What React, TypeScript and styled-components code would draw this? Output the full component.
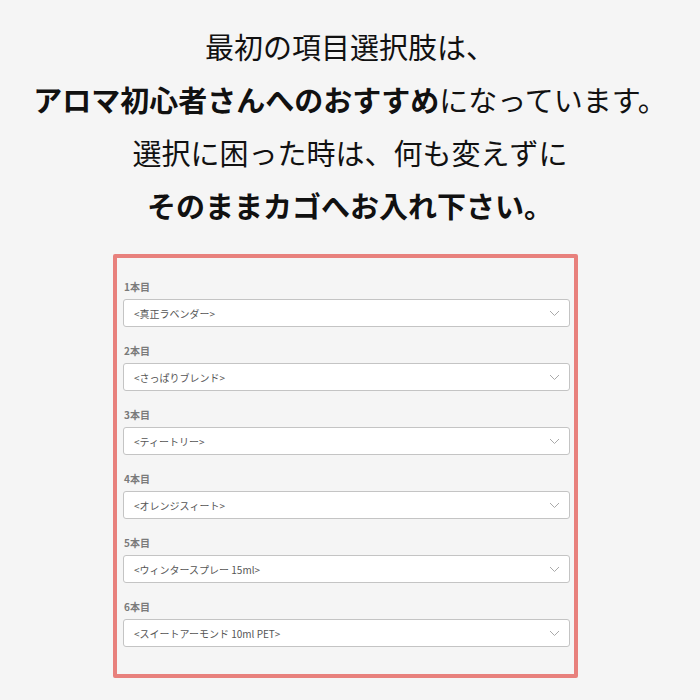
import React from 'react';
import styled, { createGlobalStyle } from 'styled-components';

const GlobalStyle = createGlobalStyle`
  html, body {
    margin: 0;
    padding: 0;
    background: #f5f5f5;
    font-family: "Noto Sans CJK JP", "Noto Sans", sans-serif;
  }
`;

const Page = styled.main`
  width: 700px;
  height: 700px;
  box-sizing: border-box;
  padding-top: 20px;
  display: flex;
  flex-direction: column;
  align-items: center;
`;

const Lead = styled.div`
  text-align: center;
  font-size: 29px;
  line-height: 53px;
  color: #111;
  margin-bottom: 22px;
`;

const Strong = styled.strong`
  font-weight: 700;
`;

const OptionPanel = styled.section`
  width: 465px;
  margin-right: 9px;
  box-sizing: border-box;
  border: 4px solid #e8817d;
  border-radius: 2px;
  background: #f5f5f5;
  padding: 20px 4px 27px 6px;
`;

const Field = styled.div`
  margin-bottom: 15px;
  &:last-child {
    margin-bottom: 0;
  }
`;

const FieldLabel = styled.div`
  font-size: 10px;
  line-height: 18px;
  font-weight: 700;
  color: #7a7a7a;
  padding-left: 1px;
  margin-bottom: 3px;
`;

const SelectBox = styled.div`
  height: 28px;
  box-sizing: border-box;
  background: #fff;
  border: 1px solid #c4c4c4;
  border-radius: 3px;
  display: flex;
  align-items: center;
  justify-content: space-between;
  padding: 0 9px 0 10px;
  font-size: 10px;
  color: #555;
`;

const Chevron = () => (
  <svg width="11" height="7" viewBox="0 0 11 7" fill="none">
    <path d="M1 1l4.5 4.5L10 1" stroke="#aaa" strokeWidth="1" />
  </svg>
);

const choices = [
  '<真正ラベンダー>',
  '<さっぱりブレンド>',
  '<ティートリー>',
  '<オレンジスィート>',
  '<ウィンタースプレー 15ml>',
  '<スイートアーモンド 10ml PET>',
];

const App = () => (
  <>
    <GlobalStyle />
    <Page>
      <Lead>
        最初の項目選択肢は、
        <br />
        <Strong>アロマ初心者さんへのおすすめ</Strong>になっています。
        <br />
        選択に困った時は、何も変えずに
        <br />
        <Strong>そのままカゴへお入れ下さい。</Strong>
      </Lead>
      <OptionPanel>
        {choices.map((choice, i) => (
          <Field key={i}>
            <FieldLabel>{i + 1}本目</FieldLabel>
            <SelectBox>
              <span>{choice}</span>
              <Chevron />
            </SelectBox>
          </Field>
        ))}
      </OptionPanel>
    </Page>
  </>
);

export default App;
